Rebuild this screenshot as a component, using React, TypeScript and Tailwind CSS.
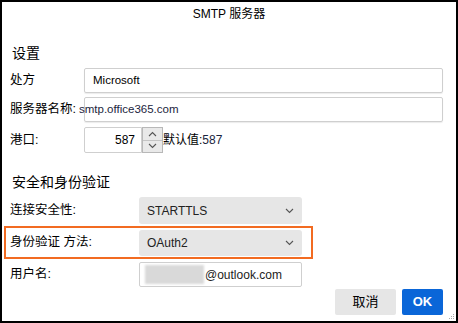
import React from 'react';

const cjk = { fontFamily: '"Liberation Sans", "Noto Sans CJK SC", sans-serif' };

const Chevron: React.FC<{ up?: boolean; className?: string }> = ({ up, className }) => (
  <svg width="9" height="6" viewBox="0 0 9 6" className={className}>
    <path
      d={up ? 'M1 5 L4.5 1.5 L8 5' : 'M1 1 L4.5 4.5 L8 1'}
      fill="none"
      stroke="#555"
      strokeWidth="1.1"
    />
  </svg>
);

const Select: React.FC<{ value: string }> = ({ value }) => (
  <div className="w-[163px] h-full bg-[#e6e6e6] rounded-[3px] flex items-center justify-between pl-[8px] pr-[8px] text-[12px] text-[#222]">
    <span>{value}</span>
    <Chevron />
  </div>
);

const App: React.FC = () => {
  return (
    <div
      className="w-[458px] h-[323px] border-2 border-black bg-white relative flex flex-col text-black"
      style={cjk}
    >
      <div className="h-[24px] flex items-center justify-center text-[12px]">SMTP 服务器</div>

      <div className="mt-[17px] h-[20px] leading-[20px] pl-[10px] text-[14px]">设置</div>

      <div className="mt-[5px] h-[25px] flex items-center pl-[8px]">
        <div className="w-[74px] text-[12.5px]">处方</div>
        <div className="w-[359px] h-full border border-[#cfcfcf] rounded-[2px] shadow-[0_1px_1px_rgba(0,0,0,0.08)] flex items-center pl-[8px] text-[11.5px]">
          Microsoft
        </div>
      </div>

      <div className="mt-[4px] h-[25px] flex items-center pl-[8px]">
        <div className="w-[74px] text-[12.5px] whitespace-nowrap">服务器名称:</div>
        <div className="w-[359px] h-full border border-[#cfcfcf] rounded-[2px] shadow-[0_1px_1px_rgba(0,0,0,0.08)] flex items-center text-[11.5px] text-[#1b2540]">
          <span className="-ml-[6px]">smtp.office365.com</span>
        </div>
      </div>

      <div className="mt-[5px] h-[26px] flex items-center pl-[8px]">
        <div className="w-[74px] text-[12.5px]">港口:</div>
        <div className="w-[58px] h-full border border-[#cfcfcf] rounded-l-[2px] flex items-center justify-end pr-[6px] text-[12px]">
          587
        </div>
        <div className="w-[21px] h-full border border-[#b8b8b8] bg-[#e9e9e9] flex flex-col">
          <div className="flex-1 flex items-center justify-center border-b border-[#c4c4c4]">
            <Chevron up />
          </div>
          <div className="flex-1 flex items-center justify-center">
            <Chevron />
          </div>
        </div>
        <div className="text-[12px] whitespace-nowrap">
          默认值:<span className="text-[#1b2540]">587</span>
        </div>
      </div>

      <div className="mt-[19px] h-[20px] leading-[20px] pl-[10px] text-[14px]">安全和身份验证</div>

      <div className="mt-[5px] h-[27px] flex items-center pl-[8px]">
        <div className="w-[129px] text-[12.5px]">连接安全性:</div>
        <Select value="STARTTLS" />
      </div>

      <div className="mt-[2px] ml-[2px] w-[309px] h-[33px] border-2 border-[#f26b21] flex items-center pl-[4px]">
        <div className="w-[129px] text-[12.5px] whitespace-nowrap">身份验证 方法:</div>
        <div className="h-[26px]">
          <Select value="OAuth2" />
        </div>
      </div>

      <div className="mt-[3px] h-[25px] flex items-center pl-[8px]">
        <div className="w-[129px] text-[12.5px]">用户名:</div>
        <div className="w-[163px] h-full border border-[#cfcfcf] rounded-[2px] flex items-center pl-[5px] text-[12px] text-[#222]">
          <div className="w-[59px] h-[19px] bg-[#d9d9d9] blur-[1px] mr-[1px]" />
          <span>@outlook.com</span>
        </div>
      </div>

      <div className="mt-[2px] h-[26px] flex justify-end gap-[6px] pr-[13px]">
        <div className="w-[61px] h-full bg-[#e6e6e6] rounded-[2px] flex items-center justify-center text-[13px]">
          取消
        </div>
        <div className="w-[41px] h-full bg-[#0a66d8] rounded-[2px] flex items-center justify-center text-[13px] font-bold text-white">
          OK
        </div>
      </div>

      <svg width="6" height="6" viewBox="0 0 6 6" className="absolute right-[1px] bottom-[1px]">
        <rect x="4" y="0" width="1" height="1" fill="#aaa" />
        <rect x="2" y="2" width="1" height="1" fill="#aaa" />
        <rect x="4" y="2" width="1" height="1" fill="#aaa" />
        <rect x="0" y="4" width="1" height="1" fill="#aaa" />
        <rect x="2" y="4" width="1" height="1" fill="#aaa" />
        <rect x="4" y="4" width="1" height="1" fill="#aaa" />
      </svg>
    </div>
  );
};

export default App;
